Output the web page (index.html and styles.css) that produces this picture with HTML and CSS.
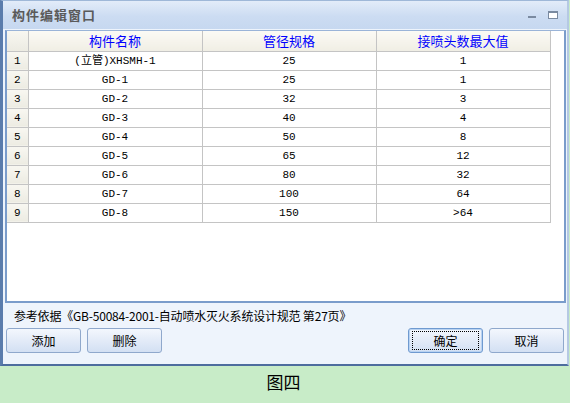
FILE: index.html
```html
<!DOCTYPE html>
<html>
<head>
<meta charset="utf-8">
<link rel="stylesheet" href="styles.css">
</head>
<body>
<div class="window">
  <div class="titlebar">
    <span class="title">构件编辑窗口</span>
    <div class="controls">
      <span class="ctl-min"></span>
      <span class="ctl-max"></span>
    </div>
  </div>
  <div class="grid">
    <table>
      <colgroup>
        <col class="c0"><col class="c1"><col class="c1"><col class="c1">
      </colgroup>
      <thead>
        <tr><th class="rn"></th><th>构件名称</th><th>管径规格</th><th>接喷头数最大值</th></tr>
      </thead>
      <tbody>
        <tr><td class="rn">1</td><td>(立管)XHSMH-1</td><td>25</td><td>1</td></tr>
        <tr><td class="rn">2</td><td>GD-1</td><td>25</td><td>1</td></tr>
        <tr><td class="rn">3</td><td>GD-2</td><td>32</td><td>3</td></tr>
        <tr><td class="rn">4</td><td>GD-3</td><td>40</td><td>4</td></tr>
        <tr><td class="rn">5</td><td>GD-4</td><td>50</td><td>8</td></tr>
        <tr><td class="rn">6</td><td>GD-5</td><td>65</td><td>12</td></tr>
        <tr><td class="rn">7</td><td>GD-6</td><td>80</td><td>32</td></tr>
        <tr><td class="rn">8</td><td>GD-7</td><td>100</td><td>64</td></tr>
        <tr><td class="rn">9</td><td>GD-8</td><td>150</td><td>&gt;64</td></tr>
      </tbody>
    </table>
  </div>
  <div class="ref">参考依据《GB-50084-2001-自动喷水灭火系统设计规范 第27页》</div>
  <div class="buttons">
    <div class="left">
      <button class="btn">添加</button>
      <button class="btn">删除</button>
    </div>
    <div class="right">
      <button class="btn default"><span class="focus">确定</span></button>
      <button class="btn">取消</button>
    </div>
  </div>
</div>
<div class="caption">图四</div>
</body>
</html>
```
FILE: styles.css
```css
* { box-sizing: border-box; }
html, body { margin: 0; padding: 0; }
body {
  width: 570px;
  height: 403px;
  background: #c8ecc8;
  font-family: "Liberation Mono", "Noto Sans CJK SC", monospace;
  font-size: 12px;
  color: #000;
  overflow: hidden;
}
.window {
  width: 569px;
  height: 366px;
  background: #eef4fc;
  border: 1px solid #9fb8d8;
  border-left: 3px solid #5a7cac;
  border-bottom: 2px solid #4d6d9e;
  border-right: 2px solid #b5c9e3;
  display: flex;
  flex-direction: column;
}
.titlebar {
  height: 28px;
  flex: none;
  background: linear-gradient(#e3ecf9, #ccdcf2 55%, #c6d8f0);
  display: flex;
  align-items: center;
  justify-content: space-between;
  padding: 0 9px 0 9px;
}
.title {
  font-family: "Noto Sans CJK SC", sans-serif;
  font-weight: bold;
  font-size: 13px;
  color: #5a5a5a;
  letter-spacing: 1px;
  margin-top: -1px;
}
.controls { display: flex; align-items: center; gap: 12px; margin-top: -1px; }
.ctl-min {
  width: 8px; height: 2px; background: #7a8aa0; margin-top: 4px;
}
.ctl-max {
  width: 10px; height: 8px; border: 1px solid #7a8aa0; border-top-width: 2px; background: #fff;
}
.grid {
  margin: 1px 0 0 2px;
  width: 561px;
  height: 273px;
  flex: none;
  background: #fff;
  border: 2px solid #7a9ccb;
  border-top: 1px solid #9ab4d8;
}
table {
  border-collapse: collapse;
  table-layout: fixed;
  width: 543px;
}
col.c0 { width: 21px; }
col.c1 { width: 174px; }
th, td {
  height: 19px;
  padding: 0;
  text-align: center;
  border: 1px solid #c4c4c4;
  border-top: none;
  border-left: none;
  white-space: nowrap;
  overflow: hidden;
}
th {
  height: 20px;
  font-family: "Noto Sans CJK SC", sans-serif;
  font-weight: normal;
  font-size: 13px;
  color: #0000ff;
  background: linear-gradient(#fbfaf5, #f0eee4);
  border-bottom: 1px solid #c4c4c4;
  line-height: 18px;
}
td { font-size: 11px; line-height: 18px; }
td.rn, th.rn {
  background: linear-gradient(#f8f7f1, #ecebe2);
  text-align: center;
  font-family: "Liberation Mono", monospace;
  font-size: 11px;
}
.ref {
  font-family: "Noto Sans CJK SC", sans-serif;
  font-size: 12px;
  letter-spacing: -0.2px;
  padding: 5px 0 0 11px;
  height: 25px;
  flex: none;
  line-height: 16px;
}
.buttons {
  display: flex;
  justify-content: space-between;
  padding: 0 3px 0 3px;
}
.left, .right { display: flex; gap: 6px; }
.btn {
  width: 75px;
  height: 25px;
  border: 1px solid #8fa8cc;
  border-radius: 3px;
  background: linear-gradient(#f3f7fd, #e3ebf8 50%, #d3e0f3);
  font-family: "Noto Sans CJK SC", sans-serif;
  font-size: 12px;
  color: #000;
  padding: 0;
  display: flex;
  align-items: center;
  justify-content: center;
}
.btn.default { border-color: #6f9ad0; box-shadow: inset 0 0 0 1px #b9d3f2; }
.focus {
  width: 67px;
  height: 19px;
  border: 1px dotted #000;
  display: flex;
  align-items: center;
  justify-content: center;
}
.caption {
  text-align: center;
  font-family: "Noto Sans CJK SC", sans-serif;
  font-size: 17px;
  padding-top: 5px;
  padding-right: 3px;
  line-height: 22px;
}
```
